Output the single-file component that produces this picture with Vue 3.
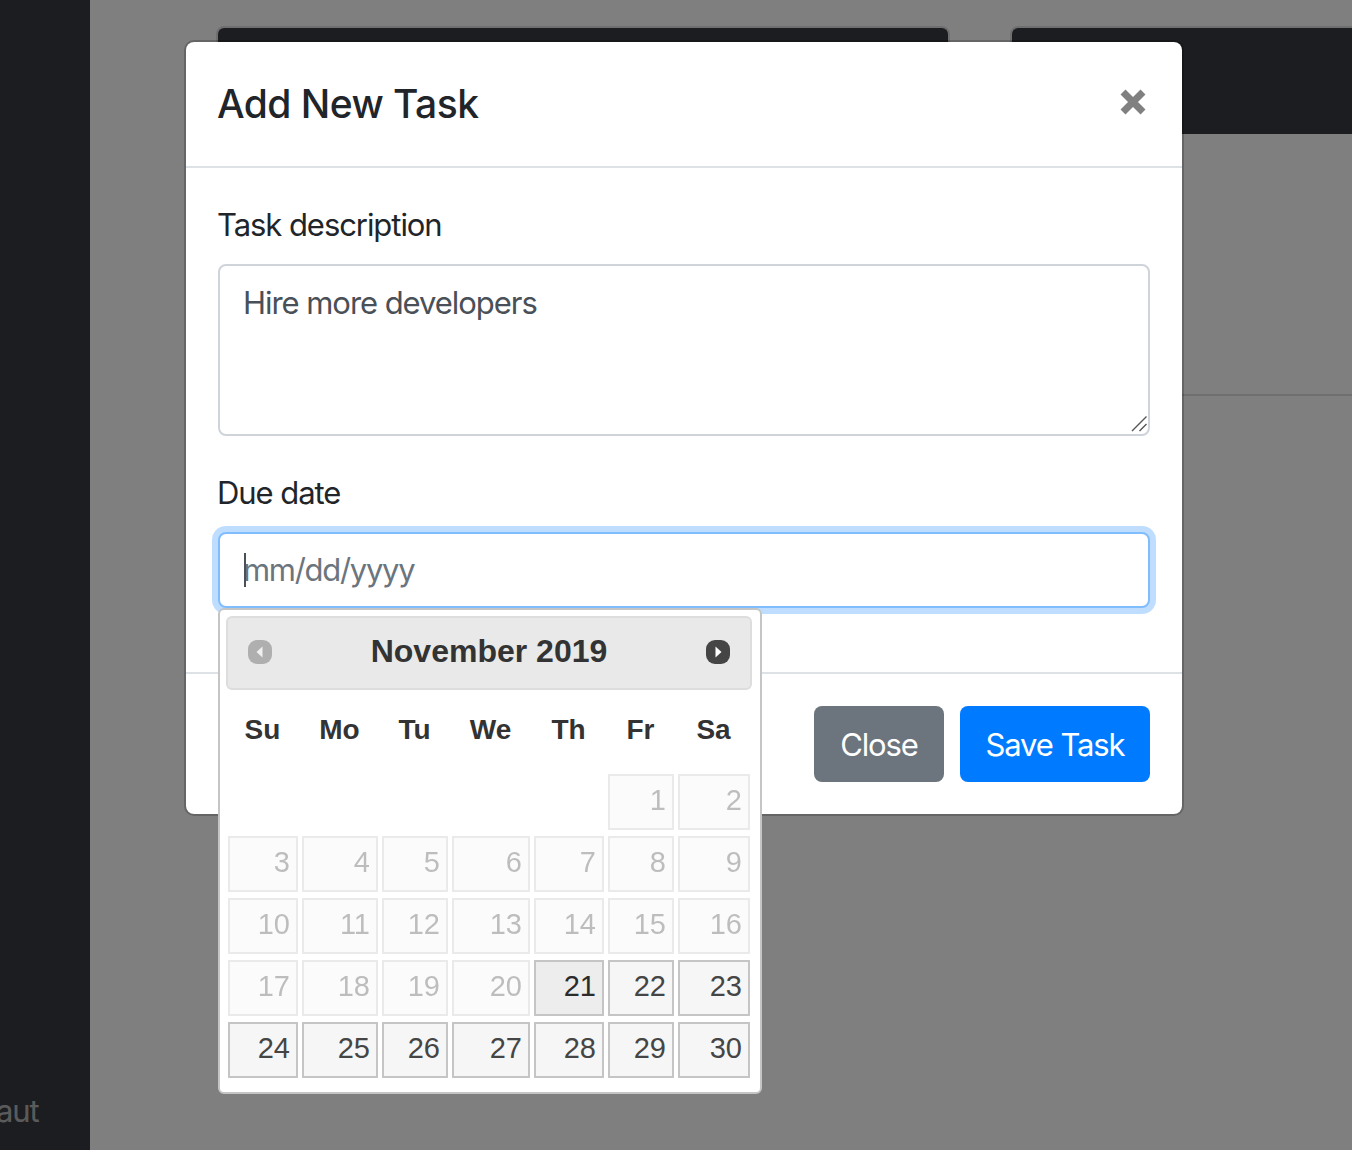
<template>
  <div class="page">
    <aside class="sidebar">
      <span class="side-link">aut</span>
    </aside>
    <main class="content">
      <section class="card">
        <div class="card-head"></div>
      </section>
      <section class="card">
        <div class="card-head"></div>
      </section>
    </main>

    <div class="backdrop">
      <div class="modal">
        <header class="modal-header">
          <h5 class="modal-title">Add New Task</h5>
          <button class="close" aria-label="Close">
            <svg width="26" height="26" viewBox="0 0 26 26">
              <path d="M3 3 L23 23 M23 3 L3 23" stroke="#808080" stroke-width="7" fill="none" />
            </svg>
          </button>
        </header>

        <div class="modal-body">
          <div class="form-group">
            <label class="label">Task description</label>
            <div class="area-wrap">
              <textarea class="control area" readonly>Hire more developers</textarea>
              <svg class="grip" width="16" height="16" viewBox="0 0 16 16">
                <path d="M1 15 L15.5 0.5 M8.5 15 L15.5 8" stroke="#555" stroke-width="1.4" fill="none" />
              </svg>
            </div>
          </div>
          <div class="form-group">
            <label class="label">Due date</label>
            <div class="date-wrap">
              <input class="control date" type="text" placeholder="mm/dd/yyyy" readonly />
              <span class="caret"></span>

              <div class="picker">
                <div class="picker-head">
                  <svg class="nav nav-off" width="26" height="26" viewBox="0 0 26 26">
                    <rect x="1" y="1" width="24" height="24" rx="9" fill="#454545" />
                    <path d="M15.5 7.5 L9.5 13 L15.5 18.5 Z" fill="#fff" />
                  </svg>
                  <span class="picker-title">November 2019</span>
                  <svg class="nav" width="26" height="26" viewBox="0 0 26 26">
                    <rect x="1" y="1" width="24" height="24" rx="9" fill="#454545" />
                    <path d="M10.5 7.5 L16.5 13 L10.5 18.5 Z" fill="#fff" />
                  </svg>
                </div>
                <div class="days">
                  <div v-for="w in weekdays" :key="w" class="weekday">{{ w }}</div>
                  <div v-for="n in 5" :key="'blank' + n"></div>
                  <div
                    v-for="d in dates"
                    :key="d"
                    class="day"
                    :class="{ past: d < 21, today: d === 21 }"
                  >{{ d }}</div>
                </div>
              </div>
            </div>
          </div>
        </div>

        <footer class="modal-footer">
          <button class="btn btn-grey">Close</button>
          <button class="btn btn-blue">Save Task</button>
        </footer>
      </div>
    </div>
  </div>
</template>

<script setup>
const weekdays = ['Su', 'Mo', 'Tu', 'We', 'Th', 'Fr', 'Sa']
const dates = Array.from({ length: 30 }, (_, i) => i + 1)
</script>

<style>
html,
body {
  margin: 0;
  overflow: hidden;
}
</style>

<style scoped>
.page {
  position: relative;
  display: flex;
  width: 1352px;
  height: 1150px;
  overflow: hidden;
  background: #fff;
  font-family: Inter, "Liberation Sans", sans-serif;
  color: #212529;
}

.sidebar {
  flex: 0 0 90px;
  display: flex;
  flex-direction: column;
  justify-content: flex-end;
  padding-bottom: 15px;
  background: #383a41;
  overflow: hidden;
}
.side-link {
  margin-left: -4px;
  font-size: 31px;
  line-height: 48px;
  letter-spacing: -1.06px;
  color: rgba(255, 255, 255, 0.65);
}

.content {
  display: flex;
  align-items: flex-start;
  gap: 60px;
  padding: 26px 0 0 126px;
}
.card {
  flex: 0 0 734px;
  height: 370px;
  box-sizing: border-box;
  border: 2px solid rgba(0, 0, 0, 0.125);
  border-radius: 8px;
  overflow: hidden;
}
.card-head {
  height: 106px;
  background: #383a41;
}

.backdrop {
  position: absolute;
  inset: 0;
  background: rgba(0, 0, 0, 0.5);
}
.modal {
  position: absolute;
  left: 184px;
  top: 40px;
  width: 1000px;
  box-sizing: border-box;
  border: 2px solid rgba(0, 0, 0, 0.2);
  border-radius: 10px;
  background: #fff;
  background-clip: padding-box;
}

.modal-header {
  display: flex;
  justify-content: space-between;
  padding: 32px;
  height: 126px;
  box-sizing: border-box;
  border-bottom: 2px solid #dee2e6;
}
.modal-title {
  margin: 0 0 0 -1px;
  font-size: 39px;
  line-height: 60px;
  font-weight: 500;
  letter-spacing: -0.55px;
}
.close {
  align-self: flex-start;
  padding: 0;
  margin: 15px 4px 0 0;
  border: 0;
  background: none;
  height: 26px;
}

.modal-body {
  padding: 32px;
}
.form-group {
  margin-bottom: 32px;
}
.label {
  display: block;
  margin: 0 0 14px -1px;
  font-size: 31px;
  line-height: 50px;
  letter-spacing: -1.06px;
}
.control {
  display: block;
  width: 100%;
  box-sizing: border-box;
  padding: 13px 23px 11px;
  border: 2px solid #ced4da;
  border-radius: 8px;
  outline: none;
  font: inherit;
  font-size: 31px;
  line-height: 48px;
  letter-spacing: -1.05px;
  color: #495057;
  background: #fff;
}
.area-wrap {
  position: relative;
}
.area {
  height: 172px;
  resize: none;
}
.grip {
  position: absolute;
  right: 3px;
  bottom: 4px;
}
.date-wrap {
  position: relative;
}
.date {
  height: 76px;
  padding-top: 11px;
  padding-bottom: 13px;
  letter-spacing: -1.3px;
  border-color: #80bdff;
  box-shadow: 0 0 0 6px rgba(0, 123, 255, 0.25);
}
.date::placeholder {
  color: #6c757d;
  opacity: 1;
}
.caret {
  position: absolute;
  left: 26px;
  top: 21px;
  width: 2px;
  height: 34px;
  background: #495057;
}

.picker {
  position: absolute;
  left: 0;
  top: 76px;
  width: 544px;
  height: 486px;
  box-sizing: border-box;
  padding: 6px 8px 0 6px;
  border: 2px solid #c5c5c5;
  border-radius: 6px;
  background: #fff;
  font-family: "Liberation Sans", Arial, sans-serif;
}
.picker-head {
  display: flex;
  align-items: center;
  justify-content: space-between;
  box-sizing: border-box;
  height: 74px;
  padding: 0 19px;
  border: 2px solid #ddd;
  border-radius: 6px;
  background: #e9e9e9;
}
.nav {
  margin-top: -2px;
  filter: blur(0.6px);
}
.nav-off {
  opacity: 0.35;
}
.picker-title {
  margin-top: -4px;
  font-size: 32px;
  line-height: 44px;
  font-weight: 700;
  color: #333;
}
.days {
  display: grid;
  grid-template-columns: 70px 76px 66px 78px 70px 66px 72px;
  grid-template-rows: 78px;
  grid-auto-rows: 56px;
  column-gap: 4px;
  row-gap: 6px;
  margin-left: 2px;
}
.weekday {
  padding-right: 1px;
  font-size: 28px;
  line-height: 80px;
  font-weight: 700;
  text-align: center;
  color: #333;
}
.day {
  box-sizing: border-box;
  padding-right: 6px;
  border: 2px solid #c5c5c5;
  background: #f6f6f6;
  font-size: 29px;
  line-height: 48px;
  text-align: right;
  color: #454545;
}
.past {
  opacity: 0.35;
}
.today {
  background: #ededed;
  color: #2b2b2b;
}

.modal-footer {
  display: flex;
  justify-content: flex-end;
  gap: 16px;
  padding: 32px;
  border-top: 2px solid #dee2e6;
}
.btn {
  height: 76px;
  padding: 0;
  border: 0;
  border-radius: 8px;
  font: inherit;
  font-size: 31px;
  letter-spacing: -1.1px;
  color: #fff;
}
.btn-grey {
  width: 130px;
  background: #6c757d;
}
.btn-blue {
  width: 190px;
  background: #007bff;
}
</style>
